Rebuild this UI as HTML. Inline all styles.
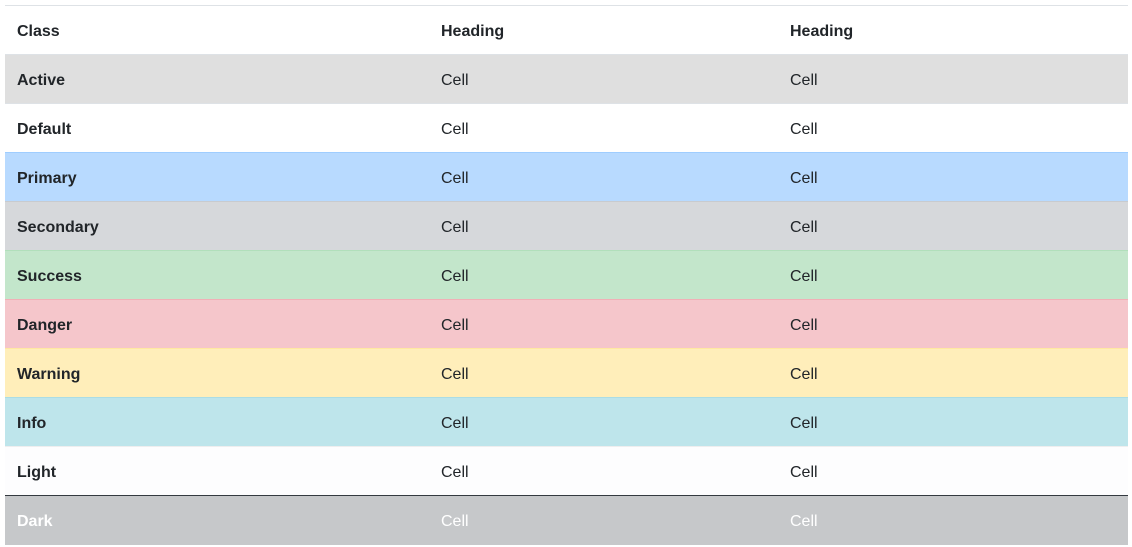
<!DOCTYPE html>
<html><head><meta charset="utf-8"><style>
html,body{margin:0;padding:0;background:#fff;width:1132px;height:547px;overflow:hidden}
body{font-family:"Liberation Sans",Arial,sans-serif;font-size:16px;color:#212529}
table{position:absolute;left:5px;top:5px;width:1123px;border-collapse:collapse}
th,td{height:49px;padding:3px 12px 0;box-sizing:border-box;text-align:left;vertical-align:middle;border-top:1px solid #dee2e6}
th{font-weight:bold}
thead th{border-bottom:1px solid #dee2e6;height:49px}
td:first-child{font-weight:bold}
col.a{width:424px}col.b{width:349px}
tr.ac td{background:#dfdfdf;border-top-color:#dfdfdf}
tr.p td{background:#b8daff;border-top-color:#9fcdff}
tr.s td{background:#d6d8db;border-top-color:#c8cbcf}
tr.su td{background:#c3e6cb;border-top-color:#b1dfbb}
tr.d td{background:#f5c6cb;border-top-color:#f1b0b7}
tr.w td{background:#ffeeba;border-top-color:#ffe8a1}
tr.i td{background:#bee5eb;border-top-color:#abdde5}
tr.l td{background:#fdfdfe;border-top-color:#eeeeef}
tr.dk td{background:#c6c8ca;color:#fff;border-top:1px solid #343a40}
</style></head><body>
<table>
<colgroup><col class="a"><col class="b"><col></colgroup>
<thead><tr><th>Class</th><th>Heading</th><th>Heading</th></tr></thead>
<tbody>
<tr class="ac"><td>Active</td><td>Cell</td><td>Cell</td></tr>
<tr><td>Default</td><td>Cell</td><td>Cell</td></tr>
<tr class="p"><td>Primary</td><td>Cell</td><td>Cell</td></tr>
<tr class="s"><td>Secondary</td><td>Cell</td><td>Cell</td></tr>
<tr class="su"><td>Success</td><td>Cell</td><td>Cell</td></tr>
<tr class="d"><td>Danger</td><td>Cell</td><td>Cell</td></tr>
<tr class="w"><td>Warning</td><td>Cell</td><td>Cell</td></tr>
<tr class="i"><td>Info</td><td>Cell</td><td>Cell</td></tr>
<tr class="l"><td>Light</td><td>Cell</td><td>Cell</td></tr>
<tr class="dk"><td>Dark</td><td>Cell</td><td>Cell</td></tr>
</tbody></table>
</body></html>
